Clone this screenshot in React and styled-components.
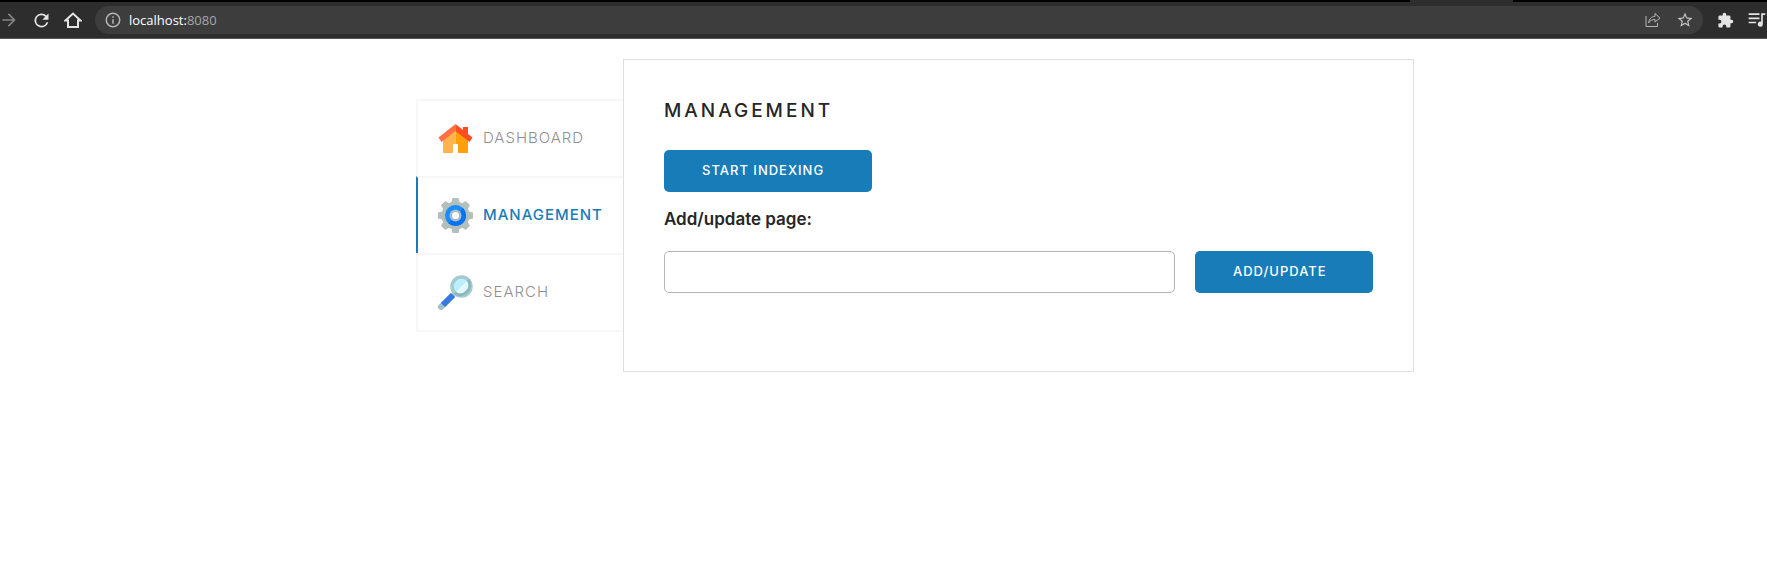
import React from 'react';
import styled, { createGlobalStyle, css } from 'styled-components';

const GlobalStyle = createGlobalStyle`
  *, *::before, *::after { box-sizing: border-box; }
  body {
    margin: 0;
    background: #fff;
    color: #262626;
    font-family: Inter, "Noto Sans", sans-serif;
  }
`;

const TabStrip = styled.div`
  display: flex;
  justify-content: flex-end;
  height: 2px;
  padding-right: 254px;
  background: #000;
`;

const ActiveTab = styled.div`
  width: 103px;
  background: #2d2d2d;
`;

const Toolbar = styled.header`
  display: flex;
  align-items: center;
  height: 37px;
  overflow: hidden;
  background: #2d2d2d;
  border-bottom: 1px solid #555;
`;

const ToolButton = styled.button`
  display: flex;
  flex: none;
  align-items: center;
  justify-content: center;
  width: 32px;
  height: 32px;
  padding: 0;
  border: 0;
  background: none;
  color: ${({ $color }) => $color || '#e4e4e4'};
`;

const LeftTools = styled.div`
  display: flex;
  flex: none;
  width: 95px;
  margin-left: -7px;
  margin-right: 7px;
`;

const RightTools = styled.div`
  display: flex;
  flex: none;
  width: 64px;
  padding-left: 6px;
`;

const AddressBar = styled.div`
  display: flex;
  flex: 1;
  align-items: center;
  height: 28px;
  padding: 0 2px;
  border-radius: 14px;
  background: #3d3d3d;
`;

const Url = styled.div`
  flex: 1;
  color: #a6a6a6;
  font: 13px/20px "Open Sans", sans-serif;
`;

const Host = styled.span`
  color: #fff;
`;

const Page = styled.div`
  padding-left: 63px;
`;

const Layout = styled.main`
  display: flex;
  align-items: flex-start;
  width: calc(100% - 63px);
  max-width: 998px;
  margin: 20px auto;
`;

const Nav = styled.nav`
  flex: none;
  width: 207px;
  margin-top: 40px;
  border-bottom: 2px solid #f7f7f7;
`;

const NavLink = styled.a`
  display: flex;
  align-items: center;
  gap: 10px;
  height: 77px;
  padding-left: 20px;
  border-top: 2px solid #f7f7f7;
  border-left: 2px solid #f7f7f7;
  color: #8f8f8f;
  font-size: 15px;
  font-weight: 300;
  letter-spacing: 1px;
  text-decoration: none;
  text-transform: uppercase;
  ${({ $active }) => $active && css`
    border-left-color: #187cb9;
    color: #187cb9;
    font-weight: 500;
  `}
`;

const NavText = styled.span`
  padding-bottom: 2px;
`;

const Panel = styled.section`
  flex: 1;
  min-width: 0;
  padding: 40px 40px 78px;
  border: 1px solid #dfdfdf;
`;

const Title = styled.h1`
  margin: 0 0 28px;
  font-size: 19px;
  font-weight: 500;
  line-height: 22px;
  letter-spacing: 3px;
  text-transform: uppercase;
`;

const Button = styled.button`
  flex: none;
  width: ${({ $wide }) => ($wide ? '208px' : '178px')};
  height: 42px;
  padding: 0 38px 2px;
  border: 0;
  border-radius: 5px;
  background: #187cb9;
  color: #fff;
  font-family: inherit;
  font-size: 13px;
  font-weight: 500;
  letter-spacing: 1px;
  text-align: left;
  text-transform: uppercase;
  white-space: nowrap;
`;

const Label = styled.label`
  display: block;
  margin: 16px 0 20px;
  font-size: 17px;
  font-weight: 600;
  line-height: 23px;
`;

const FormRow = styled.form`
  display: flex;
  gap: 20px;
`;

const TextInput = styled.input`
  flex: 1;
  min-width: 0;
  height: 42px;
  padding: 0 12px;
  border: 1px solid #b5b5b5;
  border-radius: 5px;
  background: #fff;
  font: inherit;
`;

const Material = ({ d, size = 18 }) => (
  <svg width={size} height={size} viewBox="0 0 24 24" fill="currentColor" aria-hidden="true">
    <path d={d} />
  </svg>
);

const HomeIcon = () => (
  <svg width="35" height="35" viewBox="0 0 35 35" aria-hidden="true">
    <path d="M5 15 17.500 6v26H5z" fill="#ffb54b" />
    <path d="M17.500 6 30 15v17H17.500z" fill="#ff9f0a" />
    <path d="M15 23h5v9h-5z" fill="#fff" />
    <path d="M25 6h5v9l-5-4z" fill="#ff4b1f" />
    <path d="M17.500 3 .5 16.500l3 4.500 14-11z" fill="#ff7043" />
    <path d="M17.500 3 34.500 16.500l-3 4.500-14-11z" fill="#ff4f20" />
  </svg>
);

const GearIcon = () => (
  <svg width="35" height="35" viewBox="0 0 35 35" aria-hidden="true">
    <g fill="#b3bfbd">
      {[0, 45, 90, 135].map((a) => (
        <path key={a} transform={`rotate(${a} 17.5 17.5)`} d="M14.500 0h6l1.500 6v23l-1.500 6h-6L13 29V6z" />
      ))}
      <circle cx="17.5" cy="17.5" r="14" />
    </g>
    <circle cx="17.5" cy="17.5" r="10.500" fill="#1a8dfa" />
    <path d="M10 25a10.500 10.500 0 0 0 15-15z" fill="#0a72ee" />
    <circle cx="17.5" cy="17.5" r="6" fill="#a9bcc8" />
    <circle cx="17.5" cy="17.5" r="3.500" fill="#fff" />
  </svg>
);

const SearchIcon = () => (
  <svg width="35" height="35" viewBox="0 0 35 35" aria-hidden="true">
    <path d="m17 18-4 4" stroke="#9cc4cc" strokeWidth="3" />
    <path d="M13.500 21.500 3 32" stroke="#9fc1cc" strokeWidth="6" strokeLinecap="round" />
    <path d="M15 20 5 30" stroke="#3878e5" strokeWidth="6" />
    <circle cx="23.500" cy="11.500" r="9.500" fill="#bdeefb" stroke="#a3cbcf" strokeWidth="3.500" />
    <path d="M30 5a9.500 9.500 0 0 1-13 13" fill="none" stroke="#8bb5bd" strokeWidth="3.500" />
    <path d="M29 6a8 8 0 0 1-11 11z" fill="#e2f9ff" />
  </svg>
);

const items = [
  { name: 'Dashboard', Icon: HomeIcon },
  { name: 'Management', Icon: GearIcon, active: true },
  { name: 'Search', Icon: SearchIcon },
];

export default function App() {
  return (
    <>
      <GlobalStyle />
      <TabStrip><ActiveTab /></TabStrip>
      <Toolbar>
        <LeftTools>
          <ToolButton $color="#858585" aria-label="Forward"><Material size={20} d="M12 4l-1.410 1.410L16.170 11H4v2h12.170l-5.580 5.590L12 20l8-8z" /></ToolButton>
          <ToolButton aria-label="Reload"><Material size={21} d="M17.650 6.350A8 8 0 1 0 19.730 14h-2.080A6 6 0 1 1 12 6c1.660 0 3.140.69 4.220 1.780L13 11h7V4z" /></ToolButton>
          <ToolButton aria-label="Home">
            <svg width="18" height="18" viewBox="0 0 18 18" fill="none" stroke="currentColor" strokeWidth="2" aria-hidden="true">
              <path d="M1.500 9.500 9 2.500l7.500 7H14V16H4V9.500z" />
            </svg>
          </ToolButton>
        </LeftTools>
        <AddressBar>
          <ToolButton $color="#b5b5b5" aria-label="Site information"><Material d="M11 7h2v2h-2zm0 4h2v6h-2zm1-9a10 10 0 1 0 0 20 10 10 0 0 0 0-20zm0 18a8 8 0 1 1 0-16 8 8 0 0 1 0 16z" /></ToolButton>
          <Url><Host>localhost:</Host>8080</Url>
          <ToolButton $color="#b5b5b5" aria-label="Share">
            <svg width="16" height="16" viewBox="0 0 16 16" fill="none" stroke="currentColor" aria-hidden="true">
              <path d="M1 4v10.500h11.500V11M10 1.500l5 4.500-5 4V7.500C7 7.500 5 8.500 3.500 11 4 7 6.500 4.500 10 4.300z" />
            </svg>
          </ToolButton>
          <ToolButton $color="#c4c4c4" aria-label="Bookmark"><Material d="m22 9.240-7.190-.62L12 2 9.190 8.630 2 9.240l5.460 4.730L5.820 21 12 17.270 18.180 21l-1.630-7.030zM12 15.400l-3.760 2.270 1-4.280-3.320-2.880 4.380-.38L12 6.100l1.710 4.040 4.380.38-3.320 2.880 1 4.280z" /></ToolButton>
        </AddressBar>
        <RightTools>
          <ToolButton aria-label="Extensions"><Material size={17} d="M20.500 11H19V7a2 2 0 0 0-2-2h-4V3.500a2.500 2.500 0 0 0-5 0V5H4a2 2 0 0 0-2 2v3.800h1.500a2.700 2.700 0 0 1 0 5.400H2V20a2 2 0 0 0 2 2h3.800v-1.500a2.700 2.700 0 0 1 5.400 0V22H17a2 2 0 0 0 2-2v-4h1.500a2.500 2.500 0 0 0 0-5z" /></ToolButton>
          <ToolButton aria-label="Media controls"><Material size={20} d="M22 4h-5v10.180A3 3 0 1 0 19 17V6h3zM15 4H2v2h13zm0 5H2v2h13zm-4 5H2v2h9z" /></ToolButton>
        </RightTools>
      </Toolbar>
      <Page>
        <Layout>
          <Nav>
            {items.map(({ name, Icon, active }) => (
              <NavLink key={name} href={`#${name.toLowerCase()}`} $active={active}>
                <Icon />
                <NavText>{name}</NavText>
              </NavLink>
            ))}
          </Nav>
          <Panel>
            <Title>Management</Title>
            <Button type="button" $wide>Start indexing</Button>
            <Label htmlFor="page">Add/update page:</Label>
            <FormRow>
              <TextInput id="page" type="text" />
              <Button type="button">Add/update</Button>
            </FormRow>
          </Panel>
        </Layout>
      </Page>
    </>
  );
}
